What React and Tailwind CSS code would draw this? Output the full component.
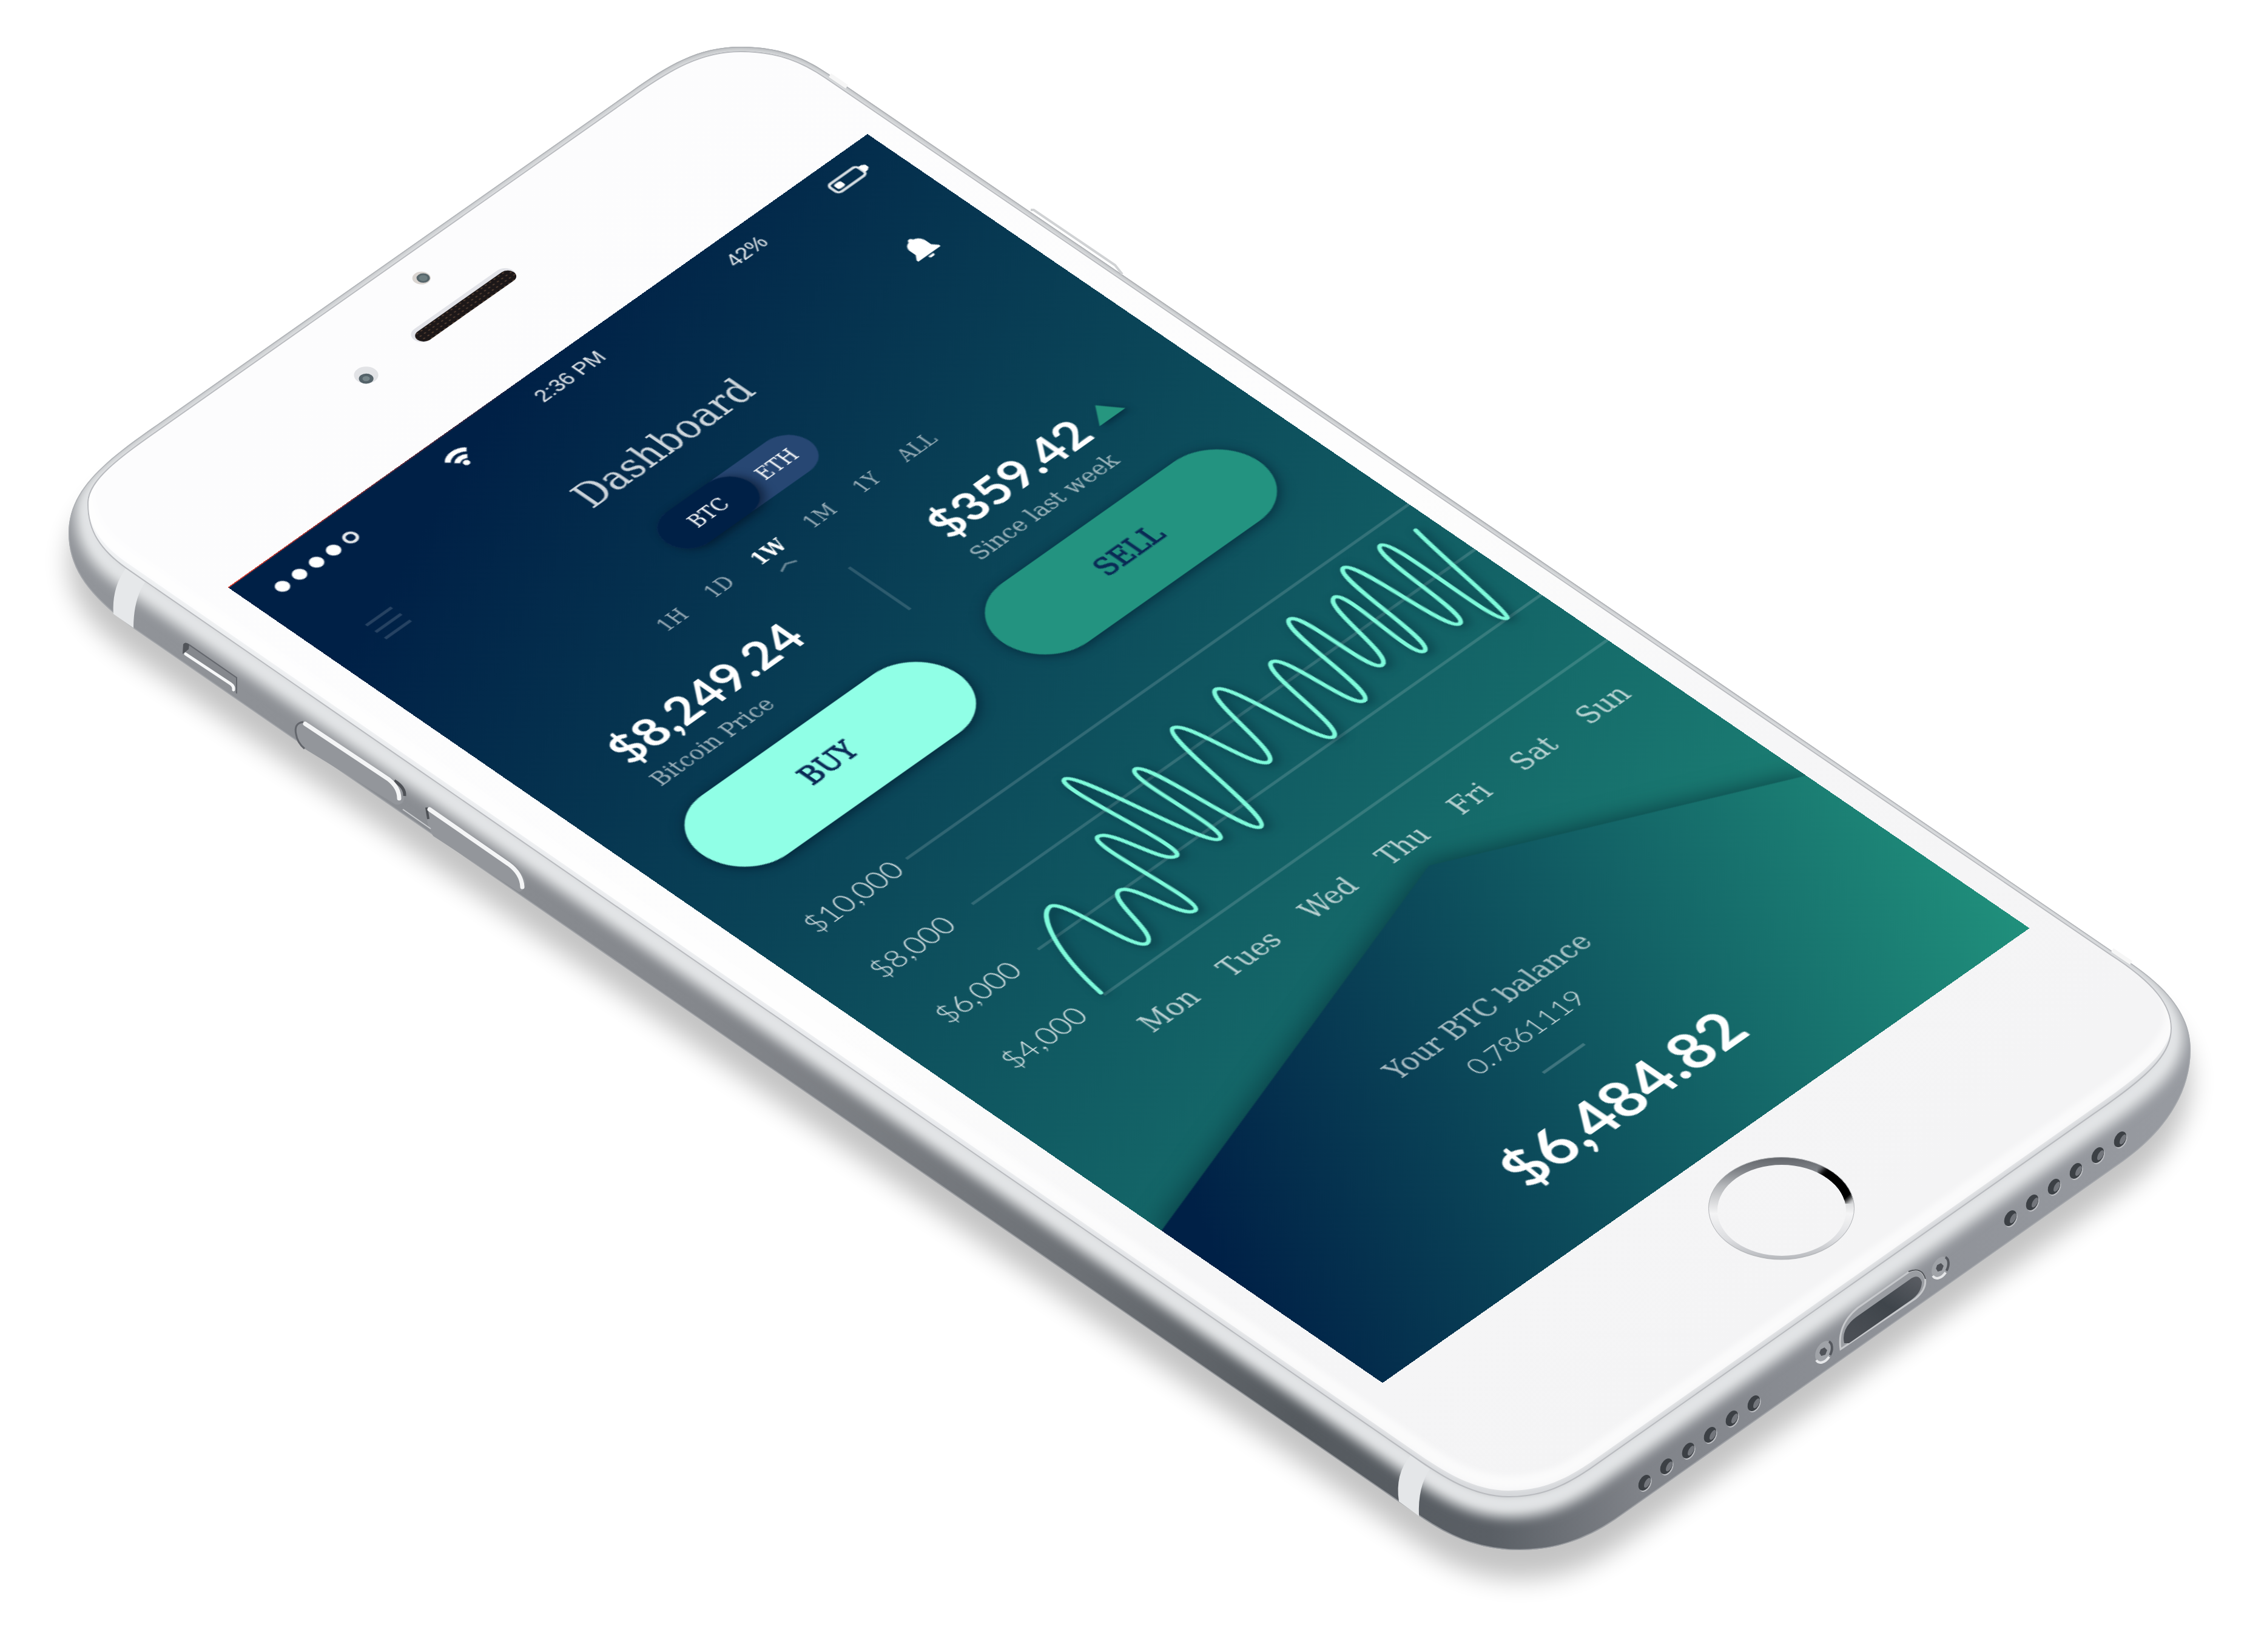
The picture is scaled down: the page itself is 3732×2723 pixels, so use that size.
import React, { useLayoutEffect, useRef, useState } from "react";

const SLAB = "font-['DejaVu_Serif_Condensed','DejaVu_Serif',serif]";
const LATO = "font-['Lato',sans-serif]";

const ARTBOARD = 3732;
const PLANE =
  "matrix3d(1.40173,-0.99667,0,-0.000002981,1.41342,0.97001,0,-0.000005426,0,0,1,0,375.5,968,0,1)";

const OUTER =
  "M259 700L1040 151C1100 108 1150 77 1221 77C1290 77 1330 98 1366 122L3485 1570C3560 1615 3611 1665 3611 1730C3611 1800 3570 1864 3500 1914L2662 2505C2610 2540 2560 2555 2505 2555C2430 2555 2380 2526 2343 2501L222 1037C150 985 113 940 113 878C114 810 165 765 259 700Z";
const GLASS =
  "M272 700L1045 156C1105 114 1155 84 1221 84C1285 84 1325 103 1362 128L3480 1573C3550 1618 3580 1655 3580 1695C3580 1740 3540 1776 3450 1838L2634 2413C2580 2452 2540 2468 2487 2468C2430 2468 2380 2437 2330 2402L207 937C165 907 143 875 144 828C145 790 195 754 272 700Z";

const HOLES = [
  [3495, 1878], [3458, 1904], [3422, 1930], [3386, 1956], [3350, 1982], [3314, 2008],
  [2891, 2313], [2855, 2338], [2819, 2365], [2783, 2391], [2747, 2417], [2711, 2444],
];

const HOME_RING =
  "M2816 1992A120.500 84.500 0 1 1 3057 1992A120.500 84.500 0 1 1 2816 1992ZM2831 1995A106 75 0 1 0 3043 1995A106 75 0 1 0 2831 1995Z";

function Phone() {
  return (
    <svg viewBox="0 0 3732 2723" className="block w-full h-auto" aria-hidden="true">
      <defs>
        <linearGradient id="side" gradientUnits="userSpaceOnUse" x1="100" y1="0" x2="3620" y2="0">
          <stop offset="0" stopColor="#92959a" />
          <stop offset="0.3" stopColor="#84878c" />
          <stop offset="0.48" stopColor="#6c7075" />
          <stop offset="0.58" stopColor="#555a5f" />
          <stop offset="0.67" stopColor="#5a5f65" />
          <stop offset="0.74" stopColor="#808389" />
          <stop offset="0.85" stopColor="#8e9197" />
          <stop offset="1" stopColor="#989ba1" />
        </linearGradient>
        <linearGradient id="glass" gradientUnits="userSpaceOnUse" x1="800" y1="300" x2="2700" y2="2400">
          <stop offset="0" stopColor="#fcfcfd" />
          <stop offset="0.5" stopColor="#fdfdfd" />
          <stop offset="0.75" stopColor="#f6f6f7" />
          <stop offset="1" stopColor="#f4f4f5" />
        </linearGradient>
        <linearGradient id="bevel" gradientUnits="userSpaceOnUse" x1="200" y1="800" x2="2500" y2="2450">
          <stop offset="0" stopColor="#eceef0" />
          <stop offset="0.6" stopColor="#e6e8eb" />
          <stop offset="1" stopColor="#d6d8db" />
        </linearGradient>
        <linearGradient id="ring" x1="0" y1="0" x2="0" y2="1">
          <stop offset="0" stopColor="#63666b" />
          <stop offset="0.12" stopColor="#7d8085" />
          <stop offset="0.28" stopColor="#b4b6b9" />
          <stop offset="0.55" stopColor="#f4f4f5" />
          <stop offset="0.8" stopColor="#dcdde0" />
          <stop offset="1" stopColor="#b6b8bc" />
        </linearGradient>
        <linearGradient id="port" x1="1" y1="0" x2="0.3" y2="1">
          <stop offset="0" stopColor="#5b5e64" />
          <stop offset="0.5" stopColor="#3f454b" />
          <stop offset="1" stopColor="#4a4e54" />
        </linearGradient>
        <pattern id="mesh" width="5" height="4" patternUnits="userSpaceOnUse">
          <rect width="5" height="4" fill="#1c1718" />
          <rect x="1" y="1" width="2" height="1" fill="#5c4536" />
        </pattern>
        <filter id="b20" x="-20%" y="-20%" width="140%" height="140%"><feGaussianBlur stdDeviation="20" /></filter>
        <filter id="b9" x="-20%" y="-20%" width="140%" height="140%"><feGaussianBlur stdDeviation="9" /></filter>
        <filter id="b4" x="-20%" y="-20%" width="140%" height="140%"><feGaussianBlur stdDeviation="4" /></filter>
        <clipPath id="outerClip"><path d={OUTER} /></clipPath>
        <clipPath id="glassClip"><path d={GLASS} /></clipPath>
        <clipPath id="ringClip"><path d={HOME_RING} clipRule="evenodd" /></clipPath>
      </defs>

      <path d={OUTER} transform="translate(0 48)" fill="#000" opacity="0.23" filter="url(#b20)" />

      <path d={OUTER} fill="url(#side)" />
      <g clipPath="url(#outerClip)">
        <path d={GLASS} transform="translate(0 12)" fill="none" stroke="#d9dbdd" strokeWidth="44" filter="url(#b9)" />
        <path d={GLASS} transform="translate(0 11)" fill="none" stroke="#e2e4e6" strokeWidth="18" filter="url(#b4)" />
        <path d={OUTER} fill="none" stroke="#a9acb0" strokeWidth="3" strokeOpacity="0.7" />
      </g>

      <path d="M207 937L239 960Q220 988 220 1035L187 1012Q184 970 207 937Z" fill="#e6e8ea" />
      <path d="M2325 2399L2357 2422Q2337 2450 2339 2499L2306 2475Q2299 2430 2325 2399Z" fill="#e4e6e8" />

      <path d="M301 1077L302 1062Q305 1057 313 1062L390 1116L391 1144Q384 1140 384 1132L306 1080Z" fill="#85888d" />
      <path d="M301 1078L302 1062Q305 1057 312 1062L311 1070Z" fill="#515459" />
      <path d="M312 1063L390 1117V1143" fill="none" stroke="#63666c" strokeWidth="2" />
      <path d="M306 1078L380 1127Q386 1131 385 1137" fill="none" stroke="#f6f7f8" strokeWidth="5" strokeLinecap="round" />

      <path d="M498 1190Q484 1192 488 1210Q490 1224 502 1234L652 1326Q668 1328 667 1308Q660 1292 644 1282L505 1190Z" fill="#93969b" />
      <path d="M500 1190Q484 1192 488 1210Q490 1224 502 1234" fill="none" stroke="#63666c" strokeWidth="3" />
      <path d="M650 1287Q668 1298 667 1312" fill="none" stroke="#4e5156" strokeWidth="5" />
      <path d="M503 1193L640 1284Q658 1298 658 1316" fill="none" stroke="#f4f5f6" strokeWidth="7" strokeLinecap="round" />
      <path d="M705 1330Q698 1350 714 1378L855 1470Q867 1468 866 1452Q860 1434 842 1421L710 1332Z" fill="#93969b" />
      <path d="M703 1331L706 1350" fill="none" stroke="#4e5156" strokeWidth="4" />
      <path d="M708 1334L838 1424Q860 1440 861 1462" fill="none" stroke="#f4f5f6" strokeWidth="7" strokeLinecap="round" />
      <path d="M664 1334L710 1366" fill="none" stroke="#c9cbce" strokeWidth="2" />

      <path d="M1699 346L1704 346L1838 437L1850 452" fill="none" stroke="#d0d2d4" strokeWidth="4" />

      <path d={GLASS} fill="url(#bevel)" />
      <g clipPath="url(#glassClip)">
        <path d={GLASS} transform="translate(0 -11)" fill="url(#glass)" />
        <path d={GLASS} transform="translate(0 -24)" fill="none" stroke="#ffffff" strokeWidth="22" strokeOpacity="0.6" filter="url(#b4)" />
        <path d={GLASS} fill="none" stroke="#b9bbbf" strokeWidth="4" />
      </g>
      <path d="M1368 124L1396 143" stroke="#f6f6f6" strokeWidth="7" />
      <path d="M3482 1566L3513 1587" stroke="#f6f6f6" strokeWidth="7" />

      <g transform="matrix(1.4147 -0.998 1.43 0.982 373 968)">
        <rect x="315" y="-104" width="115" height="18" rx="9" fill="#e2e3e8" />
        <rect x="317" y="-100" width="112" height="14" rx="7" fill="url(#mesh)" />
        <circle cx="371" cy="-142" r="7.5" fill="#d9d4d0" />
        <circle cx="372" cy="-141" r="5.5" fill="#57666b" />
        <circle cx="372" cy="-141" r="3.5" fill="#6d7d80" />
        <circle cx="258" cy="-94" r="10" fill="#e2e3e6" />
        <circle cx="255" cy="-91" r="6" fill="#55636a" />
        <circle cx="255" cy="-91" r="3" fill="#77868a" />
      </g>

      <path d={HOME_RING} fill="url(#ring)" fillRule="evenodd" />
      <g clipPath="url(#ringClip)">
        <path d="M3006 1926L3052 1974" fill="none" stroke="#000" strokeWidth="34" filter="url(#b4)" />
        <path d="M3014 1934L3048 1970" fill="none" stroke="#000" strokeWidth="34" />
      </g>
      <ellipse cx="2936.500" cy="1991.500" rx="120" ry="84" fill="none" stroke="#b4b6b9" strokeWidth="1" />

      {HOLES.map(([x, y]) => (
        <g key={x} transform={`rotate(28 ${x} ${y})`}>
          <ellipse cx={x + 2} cy={y + 1} rx="9" ry="14" fill="#bdbfc3" />
          <ellipse cx={x} cy={y} rx="9" ry="14" fill="#3c4045" />
          <ellipse cx={x + 4} cy={y - 2} rx="4" ry="9" fill="#73767c" />
        </g>
      ))}
      <path d="M3034 2224Q3028 2184 3062 2156L3146 2097Q3166 2087 3173 2106Q3177 2124 3158 2140Z" fill="#9a9da2" stroke="#c6c8cb" strokeWidth="3" />
      <path d="M3146 2096Q3168 2087 3174 2108" fill="none" stroke="#53565b" strokeWidth="2" />
      <path d="M3040 2214Q3034 2188 3064 2168L3148 2109Q3163 2098 3168 2113Q3168 2130 3150 2143L3048 2214Z" fill="url(#port)" />
      {[[3006, 2228], [3198, 2089]].map(([x, y]) => (
        <g key={x} transform={`rotate(28 ${x} ${y})`}>
          <ellipse cx={x} cy={y} rx="12" ry="19" fill="#a0a3a8" />
          <path d={`M${x} ${y - 19}A12 19 0 0 1 ${x + 12} ${y}`} fill="none" stroke="#55585e" strokeWidth="4" />
          <path d={`M${x + 12} ${y + 3}A12 19 0 0 1 ${x - 4} ${y + 18}`} fill="none" stroke="#e6e7e9" strokeWidth="4" />
          <path d={`M${x - 6} ${y - 1}L${x - 2} ${y - 7}L${x + 4} ${y - 5}L${x + 5} ${y + 3}L${x} ${y + 8}L${x - 5} ${y + 5}Z`} fill="#505359" />
        </g>
      ))}
    </svg>
  );
}

const WAVE = [
  [164, 848], [207, 747], [232, 834], [260, 774], [287, 835], [293, 717], [322, 779],
  [322, 650], [361, 790], [371, 683], [395, 804], [427, 671], [454, 755], [484, 664],
  [512, 772], [539, 674], [560, 760], [585, 649], [600, 741], [629, 657], [636, 754],
  [659, 638], [679, 752], [699, 641], [711, 775],
];

function wavePath() {
  let d = `M${WAVE[0][0]} ${WAVE[0][1]}`;
  for (let i = 1; i < WAVE.length; i++) {
    const [x0, y0] = WAVE[i - 1];
    const [x1, y1] = WAVE[i];
    const lead = i === 1 ? 8 : 14;
    d += `C${x0 + lead} ${i === 1 ? y0 - 60 : y0} ${x1 - 14} ${y1} ${x1} ${y1}`;
  }
  return `${d}C716 772 724 690 732 649`;
}

function StatusBar() {
  return (
    <div className="grid h-[52px] grid-cols-[1fr_auto_1fr] items-center px-[26px] text-[20px] leading-6 text-white/90 font-['Liberation_Sans',sans-serif]">
      <div className="flex items-center gap-[110px] pt-1">
        <div className="flex items-center gap-[7px] pt-1.5">
          {[0, 1, 2, 3].map((i) => (
            <span key={i} className="size-[13px] rounded-full bg-white" />
          ))}
          <span className="size-[14px] rounded-full border-[3px] border-white/90" />
        </div>
        <svg width="26" height="24" viewBox="0 0 26 24" fill="none" stroke="#fff" strokeWidth="5">
          <path d="M2 10A16 16 0 0 1 24 10" />
          <path d="M7 16A9 9 0 0 1 19 16" />
          <circle cx="13" cy="21" r="3" fill="#fff" stroke="none" />
        </svg>
      </div>
      <span>2:36 PM</span>
      <div className="flex items-center justify-end gap-20">
        <span>42%</span>
        <svg width="42" height="16" viewBox="0 0 42 16">
          <rect x="1.5" y="1.5" width="33" height="13" rx="3.5" fill="none" stroke="#fff" strokeOpacity="0.9" strokeWidth="2.5" />
          <rect x="5" y="4.500" width="8" height="7" rx="2" fill="#fff" />
          <path d="M35 4h3l3 2v4l-3 2h-3z" fill="#fff" />
        </svg>
      </div>
    </div>
  );
}

function Header() {
  return (
    <header className="grid h-36 grid-cols-[1fr_auto_1fr] items-start pl-12 pr-[52px] pt-[59px]">
      <button aria-label="Menu" className="flex w-[30px] flex-col gap-2 pt-px">
        <span className="h-[3px] w-full bg-white/15" />
        <span className="h-[3px] w-full bg-white/15" />
        <span className="h-[3px] w-full bg-white/15" />
      </button>
      <h1 className={`${SLAB} pt-0.5 text-[39px] leading-[48px] text-white/80`}>Dashboard</h1>
      <button aria-label="Notifications" className="justify-self-end pt-px">
        <svg width="26" height="28" viewBox="0 0 26 28" fill="#fff">
          <path d="M13 0c1.500 0 2.500 1 2.500 2.500C20 3.500 22 7 22 11v6l4 5v2H0v-2l4-5v-6C4 7 6 3.500 10.500 2.500 10.500 1 11.500 0 13 0z" />
          <path d="M10 25.500h6a3 3 0 0 1-6 0z" />
        </svg>
      </button>
    </header>
  );
}

function CoinToggle() {
  return (
    <div className={`${SLAB} mx-auto flex h-[50px] w-[168px] rounded-full bg-[#274773] text-[20px] leading-6 text-white`}>
      <button aria-pressed="true" className="h-full w-[99px] rounded-full bg-[#002046] shadow-[3px_3px_10px_rgba(0,12,30,0.6)]">
        BTC
      </button>
      <button aria-pressed="false" className="h-full flex-1 pr-2">ETH</button>
    </div>
  );
}

function Periods() {
  return (
    <div className={`${SLAB} mx-auto mt-[29px] flex h-10 w-[318px] items-start justify-between text-[20px] leading-7 text-white/60`}>
      {["1H", "1D", "1W", "1M", "1Y", "ALL"].map((p) =>
        p === "1W" ? (
          <button key={p} aria-pressed="true" className="flex flex-col items-center gap-[5px] font-bold text-white">
            {p}
            <svg width="20" height="6" viewBox="0 0 20 6" fill="none" stroke="#fff" strokeOpacity="0.4" strokeWidth="2">
              <path d="M1 5L10 1L19 5" />
            </svg>
          </button>
        ) : (
          <button key={p} aria-pressed="false">{p}</button>
        )
      )}
    </div>
  );
}

function Stats() {
  return (
    <section className="mt-[26px] grid grid-cols-[1fr_3px_1fr] items-center">
      <div className="pl-[83px] pt-0.5">
        <p className={`${LATO} text-[46px] font-bold leading-[52px] text-white`}>$8,249.24</p>
        <p className={`${SLAB} mt-1 text-[23px] leading-7 text-white/60`}>Bitcoin Price</p>
      </div>
      <div className="h-[71px] bg-white/15" />
      <div className="pl-20 pt-0.5">
        <div className="flex items-center gap-2.5">
          <p className={`${LATO} text-[46px] font-bold leading-[52px] text-white`}>$359.42</p>
          <svg width="30" height="20" viewBox="0 0 30 20" className="drop-shadow-[2px_3px_3px_rgba(0,20,40,0.5)]">
            <path d="M15 0L30 20H0z" fill="#26967f" />
          </svg>
        </div>
        <p className={`${SLAB} mt-1 text-[23px] leading-7 text-white/60`}>Since last week</p>
      </div>
    </section>
  );
}

function Actions() {
  return (
    <div className={`${SLAB} mt-[25px] flex gap-[52px] px-[50px] text-[28px] leading-8 text-[#0a2a55] [-webkit-text-stroke:1px]`}>
      <button className="h-[99px] flex-1 rounded-full bg-[#90ffe6] pb-1 shadow-[0_2px_12px_rgba(0,20,40,0.7)]">BUY</button>
      <button className="h-[99px] flex-1 rounded-full bg-[#239380] pb-1 shadow-[0_2px_12px_rgba(0,20,40,0.6)]">SELL</button>
    </div>
  );
}

function Chart() {
  return (
    <section className="mt-[35px]">
      <div className="relative">
        {["$10,000", "$8,000", "$6,000", "$4,000"].map((v) => (
          <div key={v} className="flex h-[76px] items-center pl-[50px]">
            <span className={`${LATO} w-[114px] text-[28px] font-light leading-8 text-white/85`}>{v}</span>
            <span className="h-[3px] flex-1 bg-white/15" />
          </div>
        ))}
        <svg
          viewBox="0 585 750 304"
          className="absolute inset-0 size-full overflow-visible drop-shadow-[2px_4px_5px_rgba(0,25,40,0.6)]"
          fill="none"
        >
          <path d={wavePath()} stroke="#7efadb" strokeWidth="4" strokeLinecap="round" strokeLinejoin="round" />
        </svg>
      </div>
      <div className={`${SLAB} flex justify-between pl-40 pr-8 pt-0.5 text-[28px] leading-6 text-white/70`}>
        {["Mon", "Tues", "Wed", "Thu", "Fri", "Sat", "Sun"].map((d) => (
          <span key={d}>{d}</span>
        ))}
      </div>
    </section>
  );
}

function Balance() {
  return (
    <section className="relative mt-[19px] h-[400px]">
      <div className="absolute inset-0 drop-shadow-[0_-4px_12px_rgba(0,30,40,0.55)]">
        <div className="size-full bg-[linear-gradient(118deg,#002046_12%,#20907c_100%)] [clip-path:polygon(0_146px,459px_0,100%_145px,100%_100%,0_100%)]" />
      </div>
      <div className="relative flex flex-col items-center pt-[135px]">
        <p className={`${SLAB} text-[28px] leading-8 text-white/65`}>Your BTC balance</p>
        <p className={`${LATO} mt-3 text-[26px] font-light leading-7 text-white/80`}>0.7861119</p>
        <div className="mt-[29px] h-[3px] w-12 bg-white/20" />
        <p className={`${LATO} mt-8 text-[57px] font-bold leading-[66px] text-white`}>$6,484.82</p>
      </div>
    </section>
  );
}

export default function App() {
  const stage = useRef(null);
  const [scale, setScale] = useState(1);

  useLayoutEffect(() => {
    const fit = () => setScale(stage.current.clientWidth / ARTBOARD);
    fit();
    window.addEventListener("resize", fit);
    return () => window.removeEventListener("resize", fit);
  }, []);

  return (
    <main className="w-full overflow-hidden bg-white">
      <div ref={stage} className="relative w-full">
        <Phone />
        <div
          className="absolute left-0 top-0 w-[750px] origin-top-left overflow-hidden bg-[linear-gradient(158deg,#002046_8%,#20907c_100%)]"
          style={{ transform: `scale(${scale}) ${PLANE}` }}
        >
          <div className="h-px bg-linear-to-r from-[#e8402f] to-transparent to-50%" />
          <div className="-mt-px">
            <StatusBar />
            <Header />
            <CoinToggle />
            <Periods />
            <Stats />
            <Actions />
            <Chart />
            <Balance />
          </div>
        </div>
      </div>
    </main>
  );
}
